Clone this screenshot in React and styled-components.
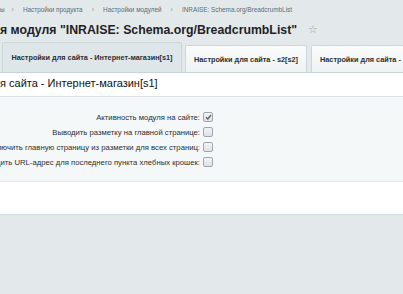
import React from "react";
import styled, { createGlobalStyle } from "styled-components";

const Global = createGlobalStyle`
  html, body {
    margin: 0;
    padding: 0;
    background: #e3e9eb;
    font-family: "Liberation Sans", Arial, sans-serif;
    overflow: hidden;
  }
`;

const Page = styled.div`
  width: 403px;
  height: 294px;
  overflow: hidden;
  background: #e3e9eb;
`;

const Crumbs = styled.div`
  display: flex;
  align-items: center;
  height: 16px;
  padding-top: 1px;
  font-size: 6.4px;
  color: #5f6b72;
  white-space: nowrap;
`;

const Crumb = styled.span`
  margin-right: ${(p) => p.$gap || 0}px;
`;

const Sep = styled.span`
  font-size: 7px;
  color: #8a969c;
  margin-right: 9px;
`;

const TitleRow = styled.div`
  display: flex;
  align-items: center;
  height: 25px;
  white-space: nowrap;
`;

const Title = styled.h1`
  margin: 0;
  font-size: 12.3px;
  font-weight: bold;
  color: #1e2224;
`;

const Star = styled.span`
  margin-left: 11px;
  font-size: 11px;
  color: #9aa6ab;
`;

const Tabs = styled.div`
  display: flex;
  align-items: flex-end;
  height: 30px;
  padding-left: 2px;
  border-bottom: 1px solid #c9d2d5;
`;

const Tab = styled.div`
  display: flex;
  align-items: center;
  justify-content: center;
  box-sizing: border-box;
  width: ${(p) => p.$w}px;
  height: ${(p) => (p.$active ? 30 : 27)}px;
  margin-right: ${(p) => p.$mr || 0}px;
  border: 1px solid #ccd5d8;
  border-bottom: none;
  border-radius: 2px 2px 0 0;
  background: ${(p) =>
    p.$active ? "#dfe6e9" : "linear-gradient(#fbfcfc, #eef2f3)"};
  font-size: 7.3px;
  font-weight: bold;
  color: #2a2f31;
  white-space: nowrap;
  overflow: hidden;
  flex-shrink: 0;
`;

const Panel = styled.div`
  background: #fff;
`;

const PanelHead = styled.div`
  height: 23px;
  line-height: 21px;
  font-size: 11px;
  color: #111;
  border-bottom: 1px solid #dfe5e7;
  white-space: nowrap;
`;

const Options = styled.div`
  display: flex;
  flex-direction: column;
  gap: 5px;
  padding: 15px 0 14px;
  background: #f5f8f9;
  border-bottom: 1px solid #e2e8ea;
`;

const Row = styled.div`
  display: flex;
  align-items: center;
  height: 10px;
`;

const Label = styled.div`
  display: flex;
  justify-content: flex-end;
  width: 200px;
  flex-shrink: 0;
  font-size: 7.7px;
  color: #2d2d2d;
  white-space: nowrap;
`;

const Box = styled.span`
  display: inline-flex;
  align-items: center;
  justify-content: center;
  box-sizing: border-box;
  width: 10px;
  height: 10px;
  margin-left: 3px;
  border: 1px solid #9ea7ab;
  border-radius: 2px;
  background: linear-gradient(#f2f4f5, #dde2e4);
`;

const Footer = styled.div`
  height: 32px;
  background: #fff;
  border-bottom: 1px solid #d5dde0;
`;

const options = [
  { label: "Активность модуля на сайте:", checked: true },
  { label: "Выводить разметку на главной странице:" },
  { label: "Исключить главную страницу из разметки для всех страниц:" },
  { label: "Выводить URL-адрес для последнего пункта хлебных крошек:" },
];

function Check({ checked }) {
  return (
    <Box>
      {checked && (
        <svg width="7" height="6" viewBox="0 0 7 6">
          <path d="M1 3.2 L2.8 5 L6 1" fill="none" stroke="#555c60" strokeWidth="1.3" />
        </svg>
      )}
    </Box>
  );
}

export default function App() {
  return (
    <Page>
      <Global />
      <Crumbs>
        <Crumb $gap={7}>ы</Crumb>
        <Sep>›</Sep>
        <Crumb $gap={9}>Настройки продукта</Crumb>
        <Sep>›</Sep>
        <Crumb $gap={9}>Настройки модулей</Crumb>
        <Sep>›</Sep>
        <Crumb>INRAISE: Schema.org/BreadcrumbList</Crumb>
      </Crumbs>
      <TitleRow>
        <Title>я модуля "INRAISE: Schema.org/BreadcrumbList"</Title>
        <Star>☆</Star>
      </TitleRow>
      <Tabs>
        <Tab $active $w={180} $mr={3}>Настройки для сайта - Интернет-магазин[s1]</Tab>
        <Tab $w={122} $mr={4}>Настройки для сайта - s2[s2]</Tab>
        <Tab $w={122}>Настройки для сайта - s3[s3]</Tab>
      </Tabs>
      <Panel>
        <PanelHead>я сайта - Интернет-магазин[s1]</PanelHead>
        <Options>
          {options.map((o) => (
            <Row key={o.label}>
              <Label>
                <span>{o.label}</span>
              </Label>
              <Check checked={o.checked} />
            </Row>
          ))}
        </Options>
        <Footer />
      </Panel>
    </Page>
  );
}
